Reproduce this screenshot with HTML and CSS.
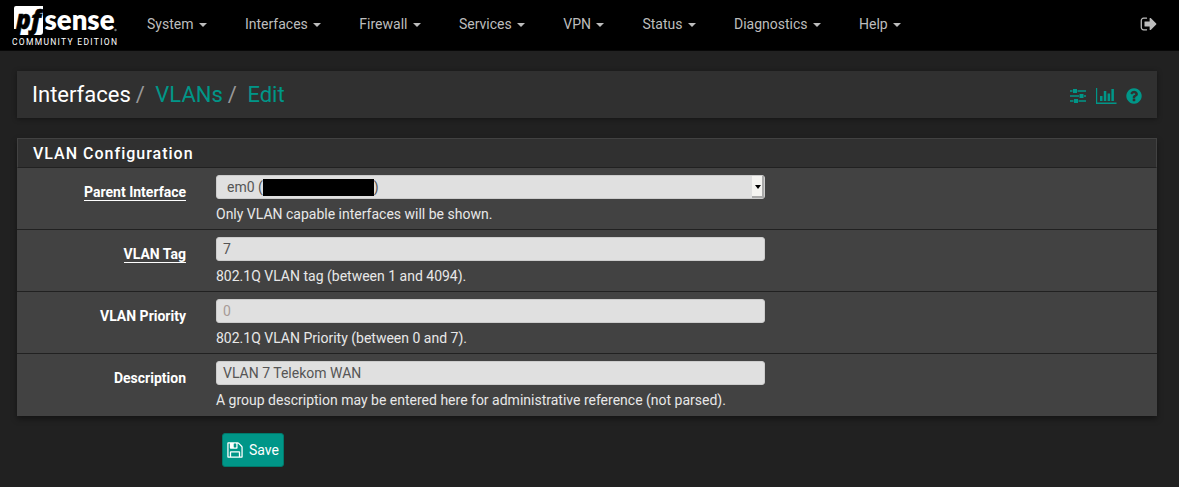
FILE: index.html
```html
<!DOCTYPE html>
<html lang="en">
<head>
<meta charset="utf-8">
<title>Interfaces: VLANs: Edit</title>
<link rel="stylesheet" href="styles.css">
</head>
<body>
<nav class="navbar">
  <svg class="logo" width="108" height="42" viewBox="0 0 108 42">
    <path class="logo-box" d="M4 0h27v26q0 3-3 3H5v-6H2V2q0-2 2-2z"/>
    <text class="logo-pf" x="4" y="23" textLength="25" lengthAdjust="spacingAndGlyphs">pf</text>
    <text class="logo-sense" x="32.500" y="23.500" textLength="70" lengthAdjust="spacingAndGlyphs">sense</text>
    <circle class="logo-reg" cx="103.500" cy="24" r="1.200"/>
    <text class="logo-edition" x="0" y="38.500" textLength="105" lengthAdjust="spacing">COMMUNITY EDITION</text>
  </svg>
  <ul class="menu">
    <li>System<i class="caret"></i></li>
    <li>Interfaces<i class="caret"></i></li>
    <li>Firewall<i class="caret"></i></li>
    <li>Services<i class="caret"></i></li>
    <li>VPN<i class="caret"></i></li>
    <li>Status<i class="caret"></i></li>
    <li>Diagnostics<i class="caret"></i></li>
    <li>Help<i class="caret"></i></li>
  </ul>
  <svg class="signout" width="18" height="18" viewBox="0 0 1792 1792"><path d="M704 1440q0 4 1 20t.5 26.500-3 23.500-10 19.500-20.500 6.500h-320q-119 0-203.500-84.500t-84.500-203.500v-704q0-119 84.500-203.500t203.500-84.500h320q13 0 22.500 9.500t9.500 22.500q0 4 1 20t.5 26.500-3 23.500-10 19.500-20.500 6.500h-320q-66 0-113 47t-47 113v704q0 66 47 113t113 47h312l11.500 1 11.500 3 8 5.500 7 9 2 13.500zm928-544q0 26-19 45l-544 544q-19 19-45 19t-45-19-19-45v-288h-448q-26 0-45-19t-19-45v-384q0-26 19-45t45-19h448v-288q0-26 19-45t45-19 45 19l544 544q19 19 19 45z"/></svg>
</nav>
<header class="header">
  <h1 class="crumbs"><span>Interfaces</span><b>/</b><a>VLANs</a><b>/</b><a>Edit</a></h1>
  <div class="tools">
    <svg width="16" height="16" viewBox="0 0 16 16"><path d="M0 2.200h2.500v1.600H0zM3 1h4v4H3zM7.500 2.200H16v1.600H7.500zM0 7.200h9v1.600H0zM9.500 6h4v4h-4zM14 7.200h2v1.600h-2zM0 12.200h3.500v1.600H0zM4 11h4v4H4zM8.500 12.200H16v1.600H8.500z"/></svg>
    <svg width="21" height="16" viewBox="0 0 21 16"><path d="M0 0h1.200v14.600H20.500V16H0zM4 8h2.500v5H4zM7.800 3h2.500v10H7.800zM11.600 5.500h2.500V13h-2.500zM15.400 1h2.500v12h-2.500z"/></svg>
    <svg width="18" height="18" viewBox="0 0 1792 1792"><path d="M1024 1376v-192q0-14-9-23t-23-9h-192q-14 0-23 9t-9 23v192q0 14 9 23t23 9h192q14 0 23-9t9-23zm256-672q0-88-55.500-163t-138.500-116-170-41q-243 0-371 213-15 24 8 42l132 100q7 6 19 6 16 0 25-12 53-68 86-92 34-24 86-24 48 0 85.500 26t37.500 59q0 38-20 61t-68 45q-63 28-115.500 86.500t-52.500 125.500v36q0 14 9 23t23 9h192q14 0 23-9t9-23q0-19 21.500-49.500t54.500-49.500q32-18 49-28.500t46-35 44.500-48 28-60.500 12.500-81zm384 192q0 209-103 385.500t-279.500 279.500-385.500 103-385.500-103-279.500-279.500-103-385.500 103-385.500 279.500-279.500 385.500-103 385.500 103 279.500 279.500 103 385.500z"/></svg>
  </div>
</header>
<main class="panel">
  <h2 class="panel-title">VLAN Configuration</h2>
  <div class="row">
    <label class="label"><span class="required">Parent Interface</span></label>
    <div class="field"><div class="control select"><span>em0 (</span><i class="redacted"></i><span>)</span><i class="drop"></i></div><p>Only VLAN capable interfaces will be shown.</p></div>
  </div>
  <div class="row">
    <label class="label"><span class="required">VLAN Tag</span></label>
    <div class="field"><div class="control">7</div><p>802.1Q VLAN tag (between 1 and 4094).</p></div>
  </div>
  <div class="row">
    <label class="label"><span>VLAN Priority</span></label>
    <div class="field"><div class="control placeholder">0</div><p>802.1Q VLAN Priority (between 0 and 7).</p></div>
  </div>
  <div class="row">
    <label class="label"><span>Description</span></label>
    <div class="field"><div class="control">VLAN 7 Telekom WAN</div><p>A group description may be entered here for administrative reference (not parsed).</p></div>
  </div>
</main>
<button class="save"><svg width="18" height="18" viewBox="0 0 1792 1792"><path d="M512 1536h768v-384h-768v384zm896 0h128v-896q0-14-10-38.500t-20-34.500l-281-281q-10-10-34-20t-39-10v416q0 40-28 68t-68 28h-576q-40 0-68-28t-28-68v-416h-128v1280h128v-416q0-40 28-68t68-28h832q40 0 68 28t28 68v416zm-384-928v-320q0-13-9.500-22.500t-22.500-9.500h-192q-13 0-22.500 9.500t-9.500 22.500v320q0 13 9.500 22.500t22.500 9.500h192q13 0 22.500-9.500t9.500-22.500zm640 32v928q0 40-28 68t-68 28h-1344q-40 0-68-28t-28-68v-1344q0-40 28-68t68-28h928q40 0 88 20t76 48l280 280q28 28 48 76t20 88z"/></svg><span>Save</span></button>
</body>
</html>
```
FILE: styles.css
```css
* { box-sizing: border-box; }
body { margin: 0; height: 487px; overflow: hidden; background: #212121; color: #e8e8e8; font: 14px/20px Roboto, sans-serif; }
svg { display: block; flex: none; }
.navbar { display: flex; height: 51px; background: #000; border-bottom: 1px solid #080808; padding: 0 21px 0 12px; }
.logo { margin-top: 6px; overflow: visible; }
.logo-box { fill: #fff; }
.logo-pf { font: italic 800 27px "Open Sans", sans-serif; fill: #000; stroke: #000; stroke-width: .6px; }
.logo-sense { font: 800 28px Lato, sans-serif; fill: #fff; }
.logo-reg { fill: #777; }
.logo-edition { font: 8.500px Roboto, sans-serif; fill: #fff; }
.menu { display: flex; gap: 38px; list-style: none; margin: 14px auto 0 27px; padding: 0; color: #bdbdbd; }
.menu li { display: flex; align-items: center; height: 20px; }
.caret { border: 4px solid transparent; border-top-color: #bdbdbd; border-bottom: 0; margin: 2px 0 0 5.500px; }
.signout { margin-top: 14.500px; fill: #bdbdbd; }
.header { display: flex; align-items: center; justify-content: space-between; margin: 20px 22px 20px 17px; height: 47px; padding: 0 14px 0 15px; background: #303030; box-shadow: 0 1px 5px rgba(0,0,0,.4); }
.crumbs { display: flex; margin: 0; font-size: 22px; font-weight: 400; line-height: 26px; color: #fff; }
.crumbs b { font-weight: 400; color: #999; margin: 0 10.500px 0 5px; }
.crumbs a { color: #009688; }
.tools { display: flex; align-items: center; fill: #009688; padding-top: 2px; }
.tools svg + svg { margin-left: 10px; }
.tools svg:last-child { margin-left: 8px; }
.panel { margin: 0 22px 0 17px; height: 278px; background: #424242; box-shadow: 0 3px 6px rgba(0,0,0,.4); }
.panel-title { margin: 0; height: 30px; border: 1px solid #424242; border-bottom-color: #212121; background: #303030; padding: 0 15px; font-size: 16px; line-height: 29px; font-weight: 500; letter-spacing: 1px; color: #fff; }
.row { display: flex; height: 62px; border-bottom: 1px solid #212121; }
.row:last-child { border-bottom: 0; }
.label { width: 169px; padding-top: 14px; text-align: right; font-weight: 700; color: #fff; }
.label span { display: inline-block; height: 19px; }
.required { border-bottom: 1px solid #fff; }
.field { margin-left: 30px; width: 549px; padding-top: 7px; }
.control { display: flex; align-items: center; height: 24px; padding: 0 6px; border: 1px solid #ccc; border-radius: 3px; background: #e0e0e0; color: #555; font-size: 14px; }
.select { padding: 0 0 0 10px; }
.placeholder { color: #a79b97; }
.redacted { width: 111px; height: 17px; background: #000; }
.drop { display: flex; align-items: center; justify-content: center; margin-left: auto; width: 12px; height: 22px; background: #f5f4f1; border-right: 2px solid #aaa; border-bottom: 2px solid #aaa; }
.drop::after { content: ""; border: 3.500px solid transparent; border-top: 4px solid #000; border-bottom: 0; margin: 2px -2px 0 0; }
.field p { margin: 5px 0 0; }
.save { display: flex; align-items: center; gap: 5px; width: 62px; height: 34px; margin: 17px 0 0 222px; padding: 0 0 0 3px; border: 1px solid #00796b; border-radius: 3px; background: #009688; color: #fff; fill: #fff; font: 14px/20px Roboto, sans-serif; }
.save svg { margin-top: -1px; }
```
